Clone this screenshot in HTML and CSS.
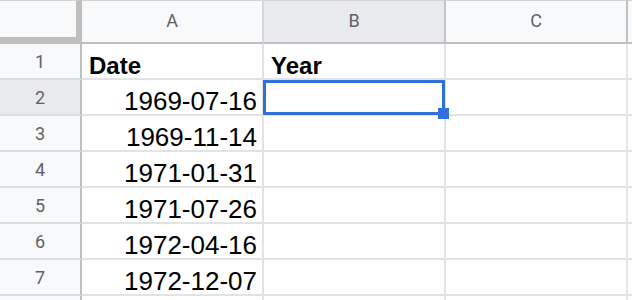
FILE: index.html
```html
<!DOCTYPE html>
<html>
<head>
<meta charset="utf-8">
<link rel="stylesheet" href="styles.css">
</head>
<body>
<div class="sheet">
  <div class="corner"></div>
  <div class="colhead">A</div>
  <div class="colhead colhead-sel">B</div>
  <div class="colhead colhead-last">C</div>
  <div class="filler-head"></div>

  <div class="rowhead">1</div>
  <div class="cell bold">Date</div>
  <div class="cell bold">Year</div>
  <div class="cell cell-last"></div>
  <div class="filler"></div>

  <div class="rowhead rowhead-sel">2</div>
  <div class="cell num">1969-07-16</div>
  <div class="cell cell-active"><div class="selection"><span class="handle"></span></div></div>
  <div class="cell cell-last"></div>
  <div class="filler"></div>

  <div class="rowhead">3</div>
  <div class="cell num">1969-11-14</div>
  <div class="cell"></div>
  <div class="cell cell-last"></div>
  <div class="filler"></div>

  <div class="rowhead">4</div>
  <div class="cell num">1971-01-31</div>
  <div class="cell"></div>
  <div class="cell cell-last"></div>
  <div class="filler"></div>

  <div class="rowhead">5</div>
  <div class="cell num">1971-07-26</div>
  <div class="cell"></div>
  <div class="cell cell-last"></div>
  <div class="filler"></div>

  <div class="rowhead">6</div>
  <div class="cell num">1972-04-16</div>
  <div class="cell"></div>
  <div class="cell cell-last"></div>
  <div class="filler"></div>

  <div class="rowhead">7</div>
  <div class="cell num">1972-12-07</div>
  <div class="cell"></div>
  <div class="cell cell-last"></div>
  <div class="filler"></div>

  <div class="rowhead"></div>
  <div class="cell"></div>
  <div class="cell"></div>
  <div class="cell cell-last"></div>
  <div class="filler"></div>
</div>
</body>
</html>
```

FILE: styles.css
```css
* { box-sizing: border-box; }

html, body {
  margin: 0;
  padding: 0;
  background: #ffffff;
  overflow: hidden;
}

.sheet {
  display: grid;
  grid-template-columns: 82px 182px 182px 182px 1fr;
  grid-template-rows: 44px repeat(8, 36px);
  width: 632px;
  height: 300px;
  overflow: hidden;
}

.corner {
  background: #f8f9fa;
  border-top: 1px solid #d3d3d3;
  border-right: 6px solid #bfbfbf;
  border-bottom: 7px solid #bfbfbf;
}

.colhead {
  display: flex;
  align-items: center;
  justify-content: center;
  background: #f8f9fa;
  border-top: 1px solid #d3d3d3;
  border-right: 2px solid #d6d7d9;
  border-bottom: 2px solid #c0c0c0;
  font-family: Roboto, "Liberation Sans", sans-serif;
  font-size: 18px;
  color: #5f6368;
  padding-bottom: 2px;
}

.colhead-sel {
  background: #e8eaed;
  border-right-color: #c4c5c7;
}

.colhead-last {
  border-right-color: #c0c0c0;
}

.filler-head {
  background: #f8f9fa;
  border-top: 1px solid #d3d3d3;
  border-bottom: 2px solid #c0c0c0;
}

.rowhead {
  display: flex;
  align-items: center;
  justify-content: center;
  background: #f8f9fa;
  border-right: 2px solid #c0c0c0;
  border-bottom: 2px solid #dcdde0;
  font-family: Roboto, "Liberation Sans", sans-serif;
  font-size: 18px;
  color: #5f6368;
}

.rowhead-sel {
  background: #e8eaed;
}

.cell {
  display: flex;
  align-items: flex-end;
  padding: 0 5px 0 7px;
  border-right: 2px solid #e2e3e5;
  border-bottom: 2px solid #e2e3e5;
  font-family: "Liberation Sans", Arial, sans-serif;
  line-height: 1;
  color: #000000;
  white-space: nowrap;
}

.cell-last {
  border-right-color: #e6e6e6;
}

.filler {
  border-bottom: 2px solid #e2e3e5;
}

.bold {
  font-weight: bold;
  font-size: 24px;
}

.num {
  justify-content: flex-end;
  font-size: 26px;
}

.cell-active {
  position: relative;
}

.selection {
  position: absolute;
  top: 0;
  left: -1px;
  right: -1px;
  bottom: -1px;
  border: 3px solid #2f6fde;
}

.handle {
  position: absolute;
  right: -7px;
  bottom: -7px;
  width: 11px;
  height: 11px;
  background: #2f6fde;
}
```
